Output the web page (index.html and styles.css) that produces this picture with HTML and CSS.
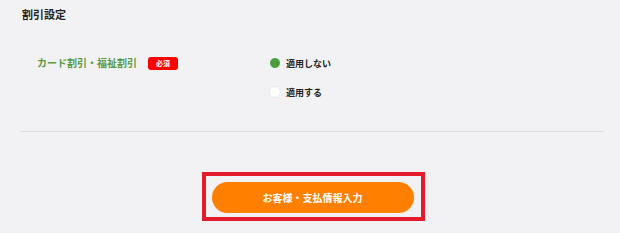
FILE: index.html
```html
<!DOCTYPE html>
<html lang="ja">
<head>
    <meta charset="UTF-8">
    <meta name="viewport" content="width=device-width, initial-scale=1.0">
    <title>割引設定</title>
    <link rel="stylesheet" href="styles.css">
</head>
<body>

    <!-- discount section -->
    <div class="section">
        <h2 class="section-title">割引設定</h2>

        <div class="field-row">
            <div class="field-label">
                <span class="label-text">カード割引・福祉割引</span>
                <span class="badge">必須</span>
            </div>
            <div class="options">
                <label class="option"><span class="radio checked"></span>適用しない</label>
                <label class="option"><span class="radio"></span>適用する</label>
            </div>
        </div>

        <div class="divider"></div>

        <!-- next step -->
        <div class="actions">
            <div class="highlight">
                <button type="button" class="next-btn">お客様・支払情報入力</button>
            </div>
        </div>
    </div>

</body>
</html>
```

FILE: styles.css
```css
*{
    margin: 0;
    padding: 0;
    box-sizing: border-box;
}
body{
    font-family: "Noto Sans CJK JP", "Noto Sans", sans-serif;
    background: #f2f1f3;
    color: #222;
    height: 100vh;
}
.section-title{
    font-size: 11px;
    line-height: 14px;
    font-weight: bold;
    padding: 7px 0 0 22px;
}
.field-row{
    display: flex;
    align-items: flex-start;
    margin-top: 35px;
    padding-left: 37px;
}
.field-label{
    display: flex;
    align-items: center;
    width: 232px;
    height: 14px;
}
.label-text{
    font-size: 10px;
    line-height: 14px;
    font-weight: bold;
    color: #5b9a3d;
}
.badge{
    margin-left: 11px;
    width: 30px;
    height: 13px;
    border-radius: 3px;
    background: #ff0000;
    color: #fff;
    font-size: 7px;
    line-height: 13px;
    font-weight: bold;
    text-align: center;
}
.options{
    display: flex;
    flex-direction: column;
    gap: 15px;
}
.option{
    display: flex;
    align-items: center;
    gap: 5px;
    height: 14px;
    font-size: 9px;
    font-weight: bold;
    color: #222;
}
.radio{
    width: 12px;
    height: 12px;
    border-radius: 50%;
    background: #fff;
    border: 1px solid #ebeaed;
}
.radio.checked{
    background: #4a9e3b;
    border: 1px solid #fff;
}
.divider{
    margin: 32px 16px 0 20px;
    height: 1px;
    background: #dcdadf;
}
.actions{
    display: flex;
    justify-content: center;
    margin: 40px 14px 0 20px;
}
.highlight{
    border: 4px solid #e31b2b;
    padding: 6px 7px 4px 6px;
}
.next-btn{
    display: block;
    width: 202px;
    height: 31px;
    border: none;
    outline: none;
    border-radius: 16px;
    background: #ff8000;
    color: #fff;
    font-family: inherit;
    font-size: 10px;
    font-weight: bold;
    cursor: pointer;
}
```
